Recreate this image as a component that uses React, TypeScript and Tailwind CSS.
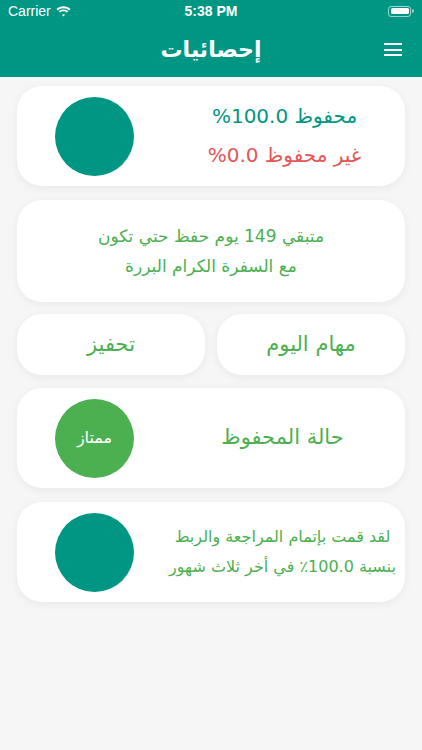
const font = { fontFamily: '"DejaVu Sans", "Noto Sans", sans-serif' };

function Circle({ color, label }: { color: string; label?: string }) {
  return (
    <div
      className={`w-[79px] h-[79px] rounded-full flex items-center justify-center shrink-0 ml-[38px] ${color}`}
    >
      {label && <span className="text-white text-[16px]">{label}</span>}
    </div>
  );
}

function StatusBar() {
  return (
    <div className="h-[22px] flex items-center justify-between px-[8px] text-white text-[14px]" style={{ fontFamily: '"Liberation Sans", sans-serif' }}>
      <div className="flex items-center gap-[5px] w-[100px]">
        <span>Carrier</span>
        <svg width="15" height="11" viewBox="0 0 15 11" fill="white">
          <path d="M7.5 2.2c2.2 0 4.2.8 5.7 2.2l1.3-1.4C12.6 1.2 10.2.2 7.5.2S2.4 1.2.5 3l1.3 1.4c1.5-1.4 3.5-2.2 5.7-2.2z" />
          <path d="M7.5 5.3c1.3 0 2.5.5 3.5 1.3l1.3-1.4c-1.3-1.1-3-1.8-4.8-1.8s-3.5.7-4.8 1.8L4 6.6c1-.8 2.2-1.3 3.5-1.3z" />
          <path d="M7.5 8.2c.6 0 1.1.2 1.5.5L7.5 10.4 6 8.7c.4-.3.9-.5 1.5-.5z" />
        </svg>
      </div>
      <span className="font-semibold">5:38 PM</span>
      <div className="w-[100px] flex justify-end">
        <div className="flex items-center">
          <div className="w-[23px] h-[11px] rounded-[3px] border border-white/60 p-[1.5px]">
            <div className="w-full h-full rounded-[1.5px] bg-white" />
          </div>
          <div className="w-[1.5px] h-[4px] bg-white/60 rounded-r-sm ml-[1px]" />
        </div>
      </div>
    </div>
  );
}

export default function App() {
  return (
    <div className="w-[422px] h-[750px] bg-[#f6f6f6] overflow-hidden" style={font}>
      <div className="bg-[#009684]">
        <StatusBar />
        <div className="h-[55px] relative flex items-center justify-center">
          <h1 className="text-white text-[22px] font-bold">إحصائيات</h1>
          <div className="absolute right-[20px] top-[21px] flex flex-col gap-[3.5px]">
            <div className="w-[18px] h-[2px] bg-white" />
            <div className="w-[18px] h-[2px] bg-white" />
            <div className="w-[18px] h-[2px] bg-white" />
          </div>
        </div>
      </div>

      <div className="px-[17px] pt-[9px] flex flex-col">
        <div className="h-[100px] bg-white rounded-[25px] shadow-[0_2px_10px_rgba(0,0,0,0.06)] flex items-center">
          <Circle color="bg-[#009684]" />
          <div dir="rtl" className="flex-1 ml-[30px] text-center text-[20px] leading-[39px]">
            <div className="text-[#009684]">محفوظ 100.0%</div>
            <div className="text-[#e55656]">غير محفوظ 0.0%</div>
          </div>
        </div>

        <div dir="rtl" className="mt-[14px] h-[102px] bg-white rounded-[25px] shadow-[0_2px_10px_rgba(0,0,0,0.06)] flex flex-col items-center justify-center text-[#4caf50] text-[17px] leading-[30px]">
          <div>متبقي 149 يوم حفظ حتي تكون</div>
          <div>مع السفرة الكرام البررة</div>
        </div>

        <div dir="rtl" className="mt-[12px] grid grid-cols-2 gap-[12px]">
          <div className="h-[61px] bg-white rounded-[25px] shadow-[0_2px_10px_rgba(0,0,0,0.06)] flex items-center justify-center text-[#4caf50] text-[21px]">
            مهام اليوم
          </div>
          <div className="h-[61px] bg-white rounded-[25px] shadow-[0_2px_10px_rgba(0,0,0,0.06)] flex items-center justify-center text-[#4caf50] text-[21px]">
            تحفيز
          </div>
        </div>

        <div className="mt-[13px] h-[100px] bg-white rounded-[25px] shadow-[0_2px_10px_rgba(0,0,0,0.06)] flex items-center">
          <Circle color="bg-[#4caf50]" label="ممتاز" />
          <div dir="rtl" className="flex-1 ml-[26px] text-center text-[#4caf50] text-[21px]">
            حالة المحفوظ
          </div>
        </div>

        <div className="mt-[14px] h-[100px] bg-white rounded-[25px] shadow-[0_2px_10px_rgba(0,0,0,0.06)] flex items-center">
          <Circle color="bg-[#009684]" />
          <div dir="rtl" className="flex-1 ml-[26px] text-center text-[#4caf50] text-[16px] leading-[30px]">
            <div>لقد قمت بإتمام المراجعة والربط</div>
            <div>بنسبة 100.0٪ في أخر ثلاث شهور</div>
          </div>
        </div>
      </div>
    </div>
  );
}
